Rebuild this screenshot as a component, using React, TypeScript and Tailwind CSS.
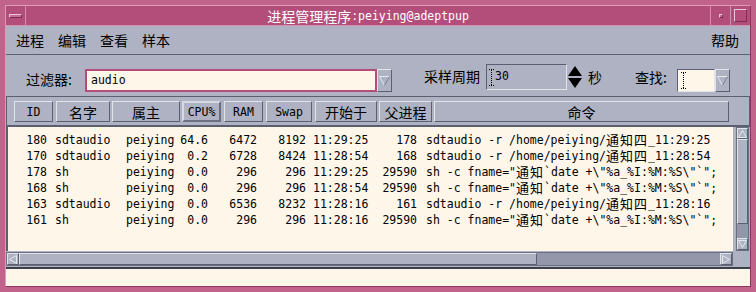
import React from "react";

const mono = "font-['DejaVu_Sans_Mono','Noto_Sans_CJK_SC',monospace]";
const cjk = "font-['Noto_Sans_CJK_SC',sans-serif]";
const raised = "border border-t-[#e2e4ec] border-l-[#e2e4ec] border-r-[#5c5f70] border-b-[#5c5f70]";
const sunken = "border border-t-[#5c5f70] border-l-[#5c5f70] border-r-[#e2e4ec] border-b-[#e2e4ec]";

const C = ({ children }: { children: React.ReactNode }) => (
  <span className={`${cjk} text-[14px] leading-[16px]`}>{children}</span>
);

// CJK inside table rows: fixed box so rows stay 16px apart
const R = ({ children }: { children: React.ReactNode }) => (
  <span className={`${cjk} inline-block h-[16px] text-[13px] leading-[16px] tracking-[1px] align-top`}>{children}</span>
);

function DownArrow() {
  return (
    <div className={`w-[15px] h-[23px] ${raised} bg-[#aeb2c3] flex items-center justify-center`}>
      <svg width="11" height="10" viewBox="0 0 11 10">
        <polygon points="0.5,0.5 10.5,0.5 5.5,9.5" fill="none" stroke="#e6e8ef" strokeWidth="1" />
        <line x1="10.5" y1="0.5" x2="5.5" y2="9.5" stroke="#6a6d7e" strokeWidth="1" />
      </svg>
    </div>
  );
}

function IBeam() {
  return (
    <svg width="5" height="17" viewBox="0 0 5 17">
      <line x1="0" y1="0.5" x2="5" y2="0.5" stroke="#000" strokeDasharray="1 1" />
      <line x1="2.5" y1="1" x2="2.5" y2="16" stroke="#000" strokeDasharray="1 1" />
      <line x1="0" y1="16.5" x2="5" y2="16.5" stroke="#000" strokeDasharray="1 1" />
    </svg>
  );
}

const cmd1 = (t: string) => (
  <>
    <span>sdtaudio -r /home/peiying/</span>
    <R>通知四</R>
    <span>_{t}</span>
  </>
);
const cmd2 = (
  <>
    <span>sh -c fname="</span>
    <R>通知</R>
    <span>{'`date +\\"%a_%I:%M:%S\\"`";'}</span>
  </>
);

const rows = [
  ["180", "sdtaudio", "peiying", "64.6", "6472", "8192", "11:29:25", "178", cmd1("11:29:25")],
  ["170", "sdtaudio", "peiying", "0.2", "6728", "8424", "11:28:54", "168", cmd1("11:28:54")],
  ["178", "sh", "peiying", "0.0", "296", "296", "11:29:25", "29590", cmd2],
  ["168", "sh", "peiying", "0.0", "296", "296", "11:28:54", "29590", cmd2],
  ["163", "sdtaudio", "peiying", "0.0", "6536", "8232", "11:28:16", "161", cmd1("11:28:16")],
  ["161", "sh", "peiying", "0.0", "296", "296", "11:28:16", "29590", cmd2],
] as const;

const headers: { label: string; w: string; ml: string; cj?: boolean; active?: boolean }[] = [
  { label: "ID", w: "w-[39px]", ml: "ml-[7px]" },
  { label: "名字", w: "w-[54px]", ml: "ml-[3px]", cj: true },
  { label: "属主", w: "w-[68px]", ml: "ml-[2px]", cj: true },
  { label: "CPU%", w: "w-[39px]", ml: "ml-[2px]", active: true },
  { label: "RAM", w: "w-[39px]", ml: "ml-[3px]" },
  { label: "Swap", w: "w-[46px]", ml: "ml-[3px]" },
  { label: "开始于", w: "w-[62px]", ml: "ml-[3px]", cj: true },
  { label: "父进程", w: "w-[53px]", ml: "ml-[2px]", cj: true },
  { label: "命令", w: "w-[295px]", ml: "ml-[2px]", cj: true },
];

export default function App() {
  return (
    <div className={`w-[756px] h-[292px] bg-[#c2638c] p-[5px] ${mono} text-[11.5px] text-black`}>
      <div className="w-full h-full border border-t-[#e09ab9] border-l-[#e09ab9] border-r-[#8c3560] border-b-[#8c3560] flex flex-col">
        {/* title bar */}
        <div className="h-[20px] flex bg-[#b34d7a] border-b border-[#d58fae]">
          <div className="w-[20px] flex items-center justify-center border-r border-[#d58fae]">
            <div className="w-[13px] h-[4px] bg-[#c66c95] border border-t-[#f0c4d7] border-l-[#f0c4d7] border-r-[#7e2c52] border-b-[#7e2c52]" />
          </div>
          <div className="flex-1 flex items-center justify-center text-white leading-[20px]">
            <C>进程管理程序</C>
            <span>:peiying@adeptpup</span>
          </div>
          <div className="w-[20px] flex items-center justify-center border-l border-[#d58fae]">
            <div className="w-[4px] h-[4px] bg-[#c66c95] border border-t-[#f0c4d7] border-l-[#f0c4d7] border-r-[#7e2c52] border-b-[#7e2c52]" />
          </div>
          <div className="w-[20px] flex items-center justify-center border-l border-[#d58fae]">
            <div className="w-[13px] h-[13px] border border-t-[#f0c4d7] border-l-[#f0c4d7] border-r-[#7e2c52] border-b-[#7e2c52]" />
          </div>
        </div>

        {/* menu bar */}
        <div className="h-[29px] bg-[#aeb2c3] border-b border-[#5c5f70] flex items-center pl-[10px] pr-[11px] gap-[14px]">
          <C>进程</C>
          <C>编辑</C>
          <C>查看</C>
          <C>样本</C>
          <div className="flex-1" />
          <C>帮助</C>
        </div>

        {/* body */}
        <div className="flex-1 bg-[#aeb2c3] flex flex-col">
          {/* filter row */}
          <div className="h-[41px] flex items-start">
            <div className="mt-[16px] ml-[20px] w-[57px] leading-[16px]">
              <C>过滤器:</C>
            </div>
            <div className="mt-[14px] ml-[2px] w-[292px] h-[23px] bg-[#fdf6e9] border-2 border-[#b34d7a] flex items-center pl-[4px]">
              audio
            </div>
            <div className="mt-[14px]">
              <DownArrow />
            </div>
            <div className="mt-[13px] ml-[32px] w-[56px] leading-[16px]">
              <C>采样周期</C>
            </div>
            <div className={`mt-[9px] ml-[6px] w-[81px] h-[26px] ${sunken} flex items-center pl-[2px] gap-[1px]`}>
              <IBeam />
              <span>30</span>
            </div>
            <div className="mt-[11px] ml-[1px] w-[14px] flex flex-col gap-[2px]">
              <svg width="14" height="10" viewBox="0 0 14 10">
                <polygon points="7,0 14,10 0,10" fill="#000" />
              </svg>
              <svg width="14" height="10" viewBox="0 0 14 10">
                <polygon points="0,0 14,0 7,10" fill="#000" />
              </svg>
            </div>
            <div className="mt-[14px] ml-[6px] leading-[16px]">
              <C>秒</C>
            </div>
            <div className="mt-[14px] ml-[33px] w-[42px] leading-[16px]">
              <C>查找:</C>
            </div>
            <div className={`mt-[14px] w-[38px] h-[23px] bg-[#fdf6e9] ${sunken} flex items-center pl-[3px]`}>
              <IBeam />
            </div>
            <div className="mt-[14px]">
              <DownArrow />
            </div>
          </div>

          {/* header */}
          <div className="h-[29px] border border-t-[#5c5f70] border-l-[#5c5f70] border-r-[#5c5f70] border-b-0 flex items-start pt-[4px]">
            {headers.map((h) => (
              <div
                key={h.label}
                className={`${h.w} ${h.ml} h-[21px] flex items-center justify-center leading-[16px] ${
                  h.active
                    ? "border-2 border-t-[#d6d9e3] border-l-[#d6d9e3] border-r-[#6c6f80] border-b-[#6c6f80]"
                    : raised
                }`}
              >
                {h.cj ? <C>{h.label}</C> : <span>{h.label}</span>}
              </div>
            ))}
          </div>

          {/* table + vertical scrollbar */}
          <div className="h-[126px] flex border-t-2 border-[#5c5f70]">
            <div className="w-[727px] bg-[#fdf6e9] border-l-2 border-[#5c5f70] pt-[5px] overflow-hidden">
              {rows.map((r, i) => (
                <div key={i} className="h-[16px] leading-[16px] flex whitespace-nowrap">
                  <span className="w-[39px] text-right">{r[0]}</span>
                  <span className="ml-[8px] w-[71px]">{r[1]}</span>
                  <span className="w-[47px]">{r[2]}</span>
                  <span className="w-[35px] text-right">{r[3]}</span>
                  <span className="w-[49px] text-right">{r[4]}</span>
                  <span className="w-[49px] text-right">{r[5]}</span>
                  <span className="ml-[7px] w-[56px]">{r[6]}</span>
                  <span className="w-[48px] text-right">{r[7]}</span>
                  <span className="ml-[9px] flex">{r[8]}</span>
                </div>
              ))}
            </div>
            <div className="ml-[3px] w-[13px] h-[124px] flex flex-col bg-[#9397a9] border border-[#6c6f80]">
              <div className={`h-[11px] ${raised} bg-[#aeb2c3] flex items-center justify-center`}>
                <svg width="9" height="8" viewBox="0 0 9 8">
                  <polygon points="4.5,0.5 8.5,7.5 0.5,7.5" fill="none" stroke="#e6e8ef" />
                </svg>
              </div>
              <div className={`h-[85px] ${raised} bg-[#aeb2c3]`} />
              <div className="flex-1" />
              <div className={`h-[12px] ${raised} bg-[#aeb2c3] flex items-center justify-center`}>
                <svg width="9" height="8" viewBox="0 0 9 8">
                  <polygon points="0.5,0.5 8.5,0.5 4.5,7.5" fill="none" stroke="#e6e8ef" />
                </svg>
              </div>
            </div>
          </div>

          {/* horizontal scrollbar */}
          <div className="h-[16px] flex items-start pt-[1px]">
            <div className="w-[727px] h-[14px] flex bg-[#9397a9] border border-[#6c6f80]">
              <div className={`w-[12px] ${raised} bg-[#aeb2c3] flex items-center justify-center`}>
                <svg width="8" height="9" viewBox="0 0 8 9">
                  <polygon points="0.5,4.5 7.5,0.5 7.5,8.5" fill="none" stroke="#e6e8ef" />
                </svg>
              </div>
              <div className={`w-[518px] ${raised} bg-[#aeb2c3]`} />
              <div className="flex-1" />
              <div className={`w-[12px] ${raised} bg-[#aeb2c3] flex items-center justify-center`}>
                <svg width="8" height="9" viewBox="0 0 8 9">
                  <polygon points="0.5,0.5 7.5,4.5 0.5,8.5" fill="none" stroke="#e6e8ef" />
                </svg>
              </div>
            </div>
          </div>

          {/* message area */}
          <div className="flex-1 bg-[#fdf6e9] border-t-2 border-[#3d3f4c]" />
        </div>
      </div>
    </div>
  );
}
